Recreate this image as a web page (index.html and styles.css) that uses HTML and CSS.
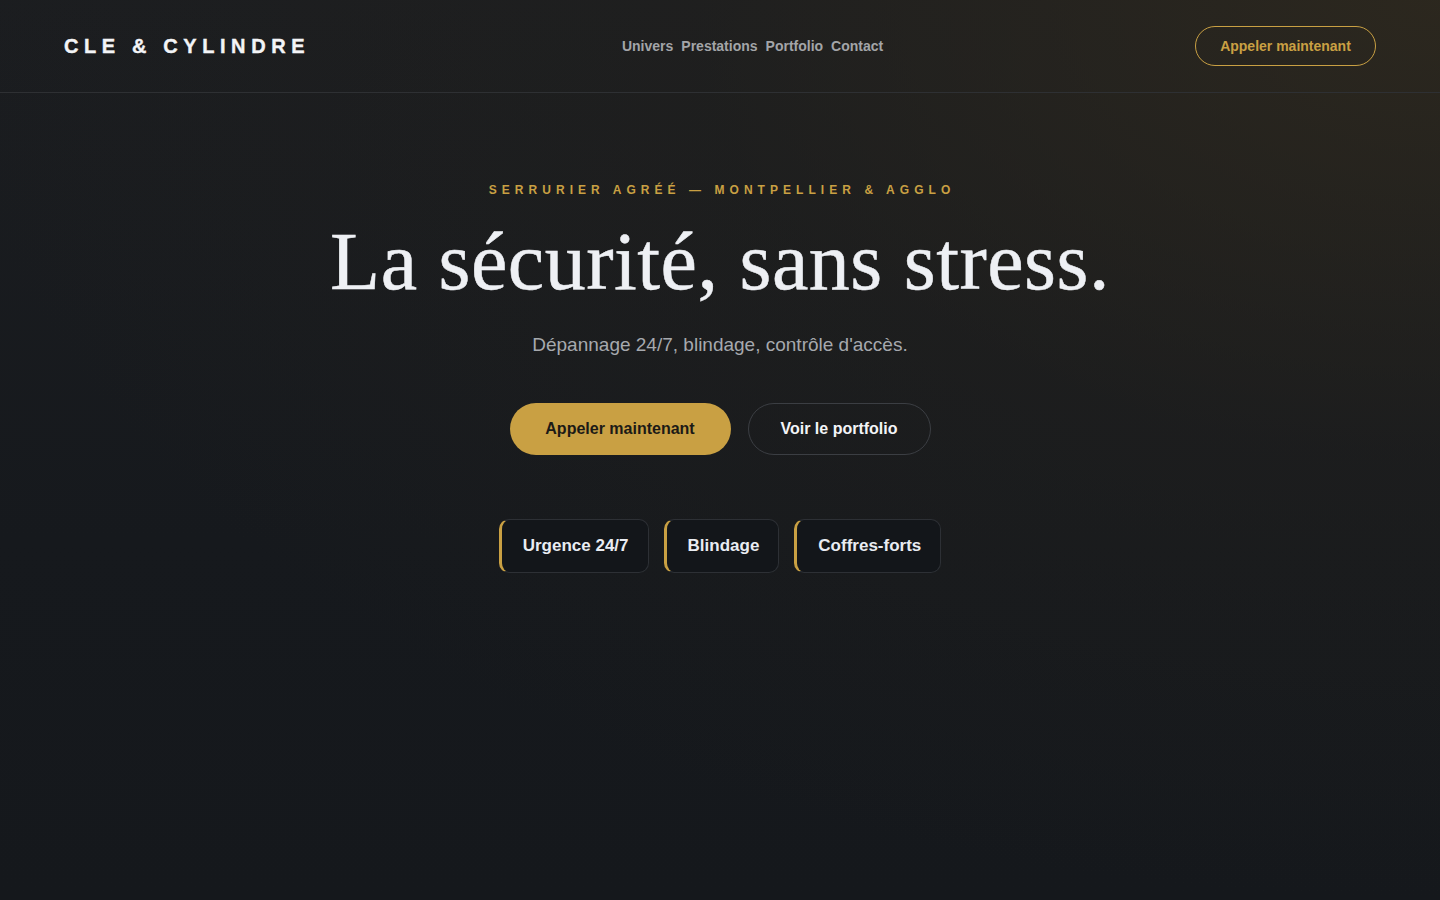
FILE: index.html
```html
<!DOCTYPE html>
<html lang="fr">
<head>
<meta charset="utf-8">
<title>Cle &amp; Cylindre</title>
<link rel="stylesheet" href="styles.css">
</head>
<body>
<div class="page">
  <header class="header">
    <div class="logo">CLE &amp; CYLINDRE</div>
    <nav class="nav">
      <a href="#">Univers</a>
      <a href="#">Prestations</a>
      <a href="#">Portfolio</a>
      <a href="#">Contact</a>
    </nav>
    <a class="btn-outline-gold" href="#">Appeler maintenant</a>
  </header>
  <main class="hero">
    <p class="eyebrow">SERRURIER AGRÉÉ — MONTPELLIER &amp; AGGLO</p>
    <h1 class="title">La sécurité, sans stress.</h1>
    <p class="subtitle">Dépannage 24/7, blindage, contrôle d'accès.</p>
    <div class="actions">
      <a class="btn btn-primary" href="#">Appeler maintenant</a>
      <a class="btn btn-ghost" href="#">Voir le portfolio</a>
    </div>
    <div class="chips">
      <div class="chip">Urgence 24/7</div>
      <div class="chip">Blindage</div>
      <div class="chip">Coffres-forts</div>
    </div>
  </main>
</div>
</body>
</html>
```
FILE: styles.css
```css
* { box-sizing: border-box; }
html, body { margin: 0; padding: 0; height: 100%; }
body {
  font-family: "Liberation Sans", Arial, sans-serif;
  background: #15181c;
  color: #e9ebef;
}
.page {
  min-height: 900px;
  background:
    radial-gradient(ellipse 1500px 900px at 100% 0%, rgba(48, 42, 30, 0.8), rgba(38, 35, 29, 0.35) 50%, rgba(21, 24, 28, 0) 100%),
    linear-gradient(180deg, #1b1d20 0%, #16191d 60%, #15181c 100%);
}
.header {
  height: 93px;
  display: flex;
  align-items: center;
  justify-content: space-between;
  padding: 0 64px;
  border-bottom: 1px solid #2e3033;
}
.logo {
  font-size: 20px;
  font-weight: 700;
  letter-spacing: 5.6px;
  color: #f3f4f7;
  -webkit-text-stroke: 0.4px #f3f4f7;
}
.nav {
  display: flex;
  gap: 8px;
}
.nav a {
  color: #a3a5a8;
  text-decoration: none;
  font-size: 14px;
  font-weight: 700;
}
.btn-outline-gold {
  width: 181px;
  height: 40px;
  display: flex;
  align-items: center;
  justify-content: center;
  border: 1px solid #c9a043;
  border-radius: 999px;
  color: #c9a043;
  text-decoration: none;
  font-size: 14px;
  font-weight: 700;
}
.hero {
  display: flex;
  flex-direction: column;
  align-items: center;
  padding-top: 90px;
}
.eyebrow {
  margin: 0 0 0 4px;
  font-size: 12px;
  font-weight: 700;
  letter-spacing: 5.05px;
  color: #c9a043;
}
.title {
  margin: 20px 0 0;
  font-family: "Liberation Serif", "Times New Roman", serif;
  font-weight: 400;
  font-size: 82px;
  line-height: 1.1;
  color: #eef0f4;
  letter-spacing: 0.5px;
  -webkit-text-stroke: 0.5px #eef0f4;
}
.subtitle {
  margin: 27px 0 0;
  font-size: 19px;
  color: #a6a9ae;
}
.actions {
  display: flex;
  gap: 17px;
  margin-top: 47px;
}
.btn {
  height: 52px;
  display: flex;
  align-items: center;
  justify-content: center;
  border-radius: 999px;
  font-size: 16px;
  font-weight: 700;
  text-decoration: none;
}
.btn-primary {
  width: 221px;
  background: #c9a043;
  color: #1c1a16;
}
.btn-ghost {
  width: 183px;
  border: 1px solid #3b3e43;
  color: #f3f4f7;
}
.chips {
  display: flex;
  gap: 15px;
  margin-top: 64px;
}
.chip {
  height: 54px;
  display: flex;
  align-items: center;
  padding: 0 19px 0 21px;
  border: 1px solid #2d3035;
  border-left: 3px solid #c9a043;
  border-radius: 10px;
  background: #13161a;
  font-size: 17px;
  font-weight: 700;
  color: #e9ecf2;
}
```
